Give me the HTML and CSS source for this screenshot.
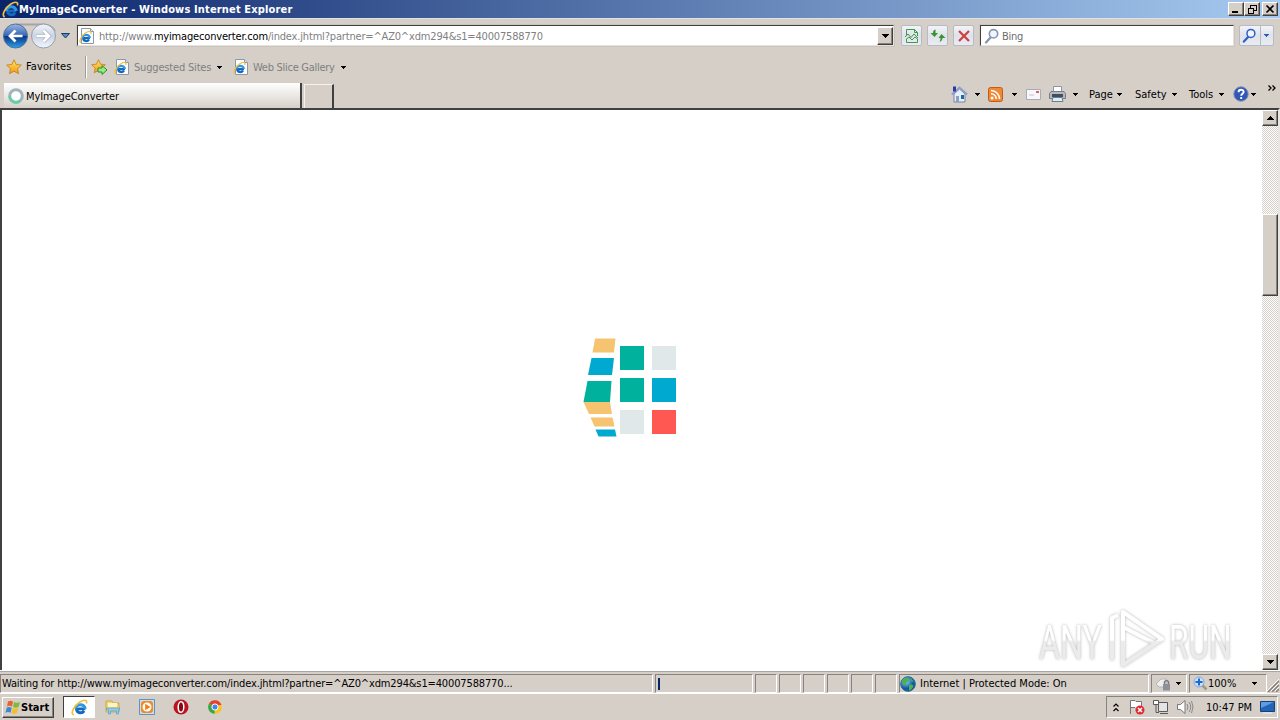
FILE: index.html
```html
<!DOCTYPE html>
<html lang="en">
<head>
  <meta charset="UTF-8">
  <title>MyImageConverter - Windows Internet Explorer</title>
  <link rel="stylesheet" href="styles.css">
</head>
<body>
  <svg class="defs" width="0" height="0">
    <defs>
      <linearGradient id="gold" x1="0" y1="0" x2="0" y2="1"><stop offset="0" stop-color="#ffe36a"/><stop offset="1" stop-color="#f29a12"/></linearGradient>
      <linearGradient id="blue" x1="0" y1="0" x2="0" y2="1"><stop offset="0" stop-color="#9db8e2"/><stop offset=".48" stop-color="#3566b5"/><stop offset=".52" stop-color="#0b3488"/><stop offset="1" stop-color="#2ba3e8"/></linearGradient>
      <linearGradient id="pale" x1="0" y1="0" x2="0" y2="1"><stop offset="0" stop-color="#f2f5fa"/><stop offset=".5" stop-color="#cbd3e2"/><stop offset="1" stop-color="#f3f8fd"/></linearGradient>
      <linearGradient id="mark" x1="0" y1="612" x2="0" y2="668" gradientUnits="userSpaceOnUse"><stop offset=".5" stop-color="#fff"/><stop offset=".53" stop-color="#ebebeb"/></linearGradient>
      <linearGradient id="mark-text" x1="0" y1="-47" x2="0" y2="9" gradientUnits="userSpaceOnUse"><stop offset=".5" stop-color="#fff"/><stop offset=".53" stop-color="#ebebeb"/></linearGradient>
      <radialGradient id="globe" cx=".35" cy=".3"><stop offset="0" stop-color="#9ddcff"/><stop offset="1" stop-color="#1456a8"/></radialGradient>
    </defs>
    <symbol id="ie" viewBox="0 0 16 16">
      <path d="M13.500 9.300H5.200C5.500 13.600 10.500 13.900 12.300 11.200" fill="none" stroke="#1668be" stroke-width="2.800"/>
      <path d="M3.800 9.300A5 5.200 0 0 1 13.500 9.300" fill="none" stroke="#2f97e4" stroke-width="2.800"/>
      <path d="M2.600 14.900C-1.200 14 3.200 6.100 8 3C11.800.6 15.800.2 14.500 4.200" fill="none" stroke="#f0c23c" stroke-width="1.600"/>
    </symbol>
    <symbol id="page" viewBox="0 0 16 16">
      <path d="M2.500.5h9l3 3v12h-12z" fill="#fdfdfd" stroke="#8d98aa"/>
      <path d="M11.500.5v3h3" fill="#dfe5ee" stroke="#8d98aa"/>
      <use href="#ie" x="0" y="2.500" width="13" height="13"/>
    </symbol>
    <symbol id="star" viewBox="0 0 16 16">
      <path d="M8 .8l2.200 4.700 5.100.6-3.800 3.500 1 5.100L8 12.200l-4.500 2.500 1-5.100L.7 6.100l5.100-.6z" fill="url(#gold)" stroke="#c98216" stroke-width=".9" stroke-linejoin="round"/>
    </symbol>
    <symbol id="lens" viewBox="0 0 16 16">
      <path d="M7 9L2 14.500" stroke="currentColor" stroke-width="2.300" stroke-linecap="round"/>
      <circle cx="9.500" cy="5.800" r="4.200" fill="#eef5ff" stroke="currentColor" stroke-width="1.600"/>
    </symbol>
    <symbol id="caret" viewBox="0 0 5 3" shape-rendering="crispEdges"><path d="M0 0h5v1H0zM1 1h3v1H1zM2 2h1v1H2z" fill="currentColor"/></symbol>
    <symbol id="caret-lg" viewBox="0 0 7 4" shape-rendering="crispEdges"><path d="M0 0h7v1H0zM1 1h5v1H1zM2 2h3v1H2zM3 3h1v1H3z"/></symbol>
  </svg>

  <header class="titlebar">
    <svg class="title-icon" width="17" height="17"><use href="#ie"/></svg>
    <h1 class="title-text">MyImageConverter - Windows Internet Explorer</h1>
    <div class="win-buttons">
      <span class="bevel win-btn"><svg width="12" height="10" shape-rendering="crispEdges"><path d="M2 7h6v2H2z"/></svg></span>
      <span class="bevel win-btn"><svg width="12" height="10" shape-rendering="crispEdges"><path d="M4.500 4V1H10v5H8M4 1.500h6M2.500 4v5h5V4zM2 4.500h6" fill="none" stroke="#000"/></svg></span>
      <span class="bevel win-btn win-close"><svg width="12" height="10"><path d="M2.500 1.500l7 7M9.500 1.500l-7 7" stroke="#000" stroke-width="1.700"/></svg></span>
    </div>
  </header>

  <div class="address-row">
    <svg class="nav" width="72" height="30" viewBox="0 0 72 30">
      <path d="M16 3.500h27q9 0 12 7" fill="none" stroke="#a3a4ac" stroke-width="2"/>
      <circle cx="15.500" cy="15" r="12" fill="url(#blue)" stroke="#557099"/>
      <path d="M22.500 15H11M15.500 9.500L10 15l5.500 5.500" fill="none" stroke="#fff" stroke-width="2.700"/>
      <circle cx="43.500" cy="15" r="12" fill="url(#pale)" stroke="#949daf"/>
      <path d="M36.500 15H48M43.500 9.500L49 15l-5.500 5.500" fill="none" stroke="#a9b3c6" stroke-width="4"/>
      <path d="M36.500 15H48M43.500 9.500L49 15l-5.500 5.500" fill="none" stroke="#fff" stroke-width="2.500"/>
      <path d="M61.500 12.500h8l-4 4.500z" fill="#4d8fc8" stroke="#1b3c66"/>
    </svg>
    <div class="field address">
      <svg width="16" height="16"><use href="#page"/></svg>
      <span class="url">http://www.<b>myimageconverter.com</b>/index.jhtml?partner=^AZ0^xdm294&amp;s1=40007588770</span>
      <span class="bevel drop"><svg width="7" height="4"><use href="#caret-lg"/></svg></span>
    </div>
    <span class="tool-btn"><svg width="16" height="16" fill="none" stroke="#3f9a49"><path d="M2.500 8V1.500h8l3 3V8M2.500 11v3.500h11V11M10.500 1.500v3h3M1 9l3-3 3 3.500L10 6l4 4M2 11.500L5 9l3 3 3-3 3 2.500"/></svg></span>
    <span class="tool-btn"><svg width="18" height="16"><path d="M6.500 1.500C4.500 2 4 3 4 5H1.500L5.500 9 9 5H6.500C6.500 3.500 6.500 2.500 6.500 1.500zM10.500 14c2-1 3-2 3-4h3L12.500 6 9.500 10h2C11.500 12 11 13 10.500 14z" fill="#38942f"/></svg></span>
    <span class="tool-btn"><svg width="16" height="16"><path d="M3 3l10 10M13 3L3 13" stroke="#cc4343" stroke-width="2.300"/></svg></span>
    <div class="field search">
      <svg width="16" height="16" color="#8796ac"><use href="#lens"/></svg>
      <span class="search-text">Bing</span>
    </div>
    <span class="tool-btn search-go">
      <svg width="15" height="15" color="#2860c8"><use href="#lens"/></svg>
      <i class="go-split"></i>
      <svg width="5" height="3" color="#2a5fae"><use href="#caret"/></svg>
    </span>
  </div>

  <div class="fav-row">
    <svg width="16" height="16"><use href="#star"/></svg>
    <span class="fav-label">Favorites</span>
    <i class="fav-sep"></i>
    <svg width="17" height="16" viewBox="0 0 17 16"><use href="#star" width="15" height="15"/><path d="M7 9h4V6.500l5 4.500-5 4.500V13H7z" fill="#9be885" stroke="#27912b"/></svg>
    <svg class="fav-page" width="16" height="16"><use href="#page"/></svg>
    <span class="fav-link sites">Suggested Sites</span>
    <svg width="5" height="3"><use href="#caret"/></svg>
    <svg class="fav-page second" width="16" height="16"><use href="#page"/></svg>
    <span class="fav-link slices">Web Slice Gallery</span>
    <svg width="5" height="3"><use href="#caret"/></svg>
  </div>

  <div class="tab-row">
    <div class="tab">
      <svg width="16" height="16"><circle cx="8" cy="8" r="6.300" fill="#fff" stroke="#9fb5bd" stroke-width="3"/><path d="M1.700 8a6.300 6.300 0 0 0 10.500 4.700" fill="none" stroke="#61cfa9" stroke-width="2.500"/></svg>
      <span class="tab-text">MyImageConverter</span>
    </div>
    <div class="new-tab"></div>
    <div class="commands">
      <svg class="home" width="17" height="17" viewBox="0 0 17 17"><path d="M3 8v8h11V8L8.500 3z" fill="#e9eef8" stroke="#7384a7"/><path d="M.8 8.500L8.500 1.500l7.700 7" fill="none" stroke="#8fa0cd" stroke-width="2"/><path d="M2 .5h3v5H2z" fill="#2b3ba0"/><path d="M5 10h3v6H5z" fill="#8da0c4"/><path d="M10 9h3v4h-3z" fill="#1b6a9a"/></svg>
      <svg class="c1" width="5" height="3"><use href="#caret"/></svg>
      <svg class="rss" width="15" height="15" viewBox="0 0 15 15"><rect x=".5" y=".5" width="14" height="14" rx="2" fill="#ef8935" stroke="#c45d14"/><circle cx="4" cy="11" r="1.500" fill="#fff"/><path d="M3 6.800A5 5 0 0 1 8.200 12M3 3.500A8.500 8.500 0 0 1 11.500 12" fill="none" stroke="#fff" stroke-width="1.600"/></svg>
      <svg class="c2" width="5" height="3"><use href="#caret"/></svg>
      <svg class="mail" width="15" height="11" viewBox="0 0 15 11"><path d="M.5.5h14v10H.5z" fill="#f8f8fa" stroke="#a8aab8"/><path d="M10 2h3v2h-3z" fill="#d9606f"/><path d="M3 6h5" stroke="#c2c4cf"/></svg>
      <svg class="printer" width="17" height="16" viewBox="0 0 17 16"><path d="M4.500 6V.5h8V6" fill="#fff" stroke="#8c95a5"/><path d="M2 5.500h13l1.500 2v5H.5v-5z" fill="#b4b8c0" stroke="#777e8a"/><path d="M3 8h11v3H3z" fill="#454d59"/><path d="M4 11.500h9l1 4H3z" fill="#d9eefb" stroke="#6b7e91"/></svg>
      <svg class="c3" width="5" height="3"><use href="#caret"/></svg>
      <span class="cmd cmd-page">Page</span>
      <svg width="5" height="3"><use href="#caret"/></svg>
      <span class="cmd cmd-safety">Safety</span>
      <svg width="5" height="3"><use href="#caret"/></svg>
      <span class="cmd cmd-tools">Tools</span>
      <svg width="5" height="3"><use href="#caret"/></svg>
      <svg class="help" width="16" height="16" viewBox="0 0 16 16"><circle cx="8" cy="8" r="7.200" fill="#3157b6" stroke="#7b8dba"/><path d="M5.500 6.200C5.500 2.800 10.800 3 10.600 6 10.500 7.800 8.200 7.800 8.200 9.800M8.200 11v2" fill="none" stroke="#fff" stroke-width="1.900"/></svg>
      <svg class="c4" width="5" height="3"><use href="#caret"/></svg>
      <svg class="more" width="8" height="6"><path d="M.5.5L3 3 .5 5.500M4.500.5L7 3 4.500 5.500" fill="none" stroke="#000" stroke-width="1.300"/></svg>
    </div>
  </div>

  <main class="viewport">
    <div class="content">
      <svg class="loader" width="94" height="100" viewBox="583 338 94 100">
        <path d="M595 338.500h20.500l-1.500 14h-21.500z" fill="#f6c470"/>
        <path d="M591.500 358H614l-2 17h-24z" fill="#00a9d0"/>
        <path d="M587.500 381h24l-1.500 21h-26.500z" fill="#00b19d"/>
        <path d="M583.500 402H610l2 12h-23z" fill="#f6c470"/>
        <path d="M590.500 417.500h22l2 9h-20z" fill="#f6c470"/>
        <path d="M595.500 429.500h19.500l1.500 7h-18z" fill="#00a9d0"/>
        <path d="M620 346h24v24h-24zM620 378h24v24h-24z" fill="#00b19d"/>
        <path d="M652 346h24v24h-24zM620 410h24v24h-24z" fill="#e1e8ea"/>
        <path d="M652 378h24v24h-24z" fill="#00a9d0"/>
        <path d="M652 410h24v24h-24z" fill="#ff5751"/>
      </svg>
      <svg class="watermark" width="214" height="68" viewBox="1034 606 214 68">
        <g class="wm-text">
          <text transform="translate(1039 659) scale(.67 1)">ANY</text>
          <text transform="translate(1169 659) scale(.66 1)">RUN</text>
        </g>
        <g class="wm-logo">
          <path d="M1123 612v53l39-26z"/>
          <path d="M1112 660v-42l6-3"/>
          <path d="M1123 627l33 17"/>
        </g>
      </svg>
    </div>
    <div class="scrollbar">
      <span class="bevel scroll-btn"><svg class="up" width="7" height="4"><use href="#caret-lg"/></svg></span>
      <span class="bevel thumb"></span>
      <span class="bevel scroll-btn scroll-down"><svg width="7" height="4"><use href="#caret-lg"/></svg></span>
    </div>
  </main>

  <div class="statusbar">
    <div class="pane pane-text"><span class="status-text">Waiting for http://www.myimageconverter.com/index.jhtml?partner=^AZ0^xdm294&amp;s1=40007588770...</span></div>
    <div class="pane pane-progress"><i class="progress"></i></div>
    <div class="pane pane-small"></div>
    <div class="pane pane-small"></div>
    <div class="pane pane-small"></div>
    <div class="pane pane-small"></div>
    <div class="pane pane-small"></div>
    <div class="pane pane-small"></div>
    <div class="pane pane-zone">
      <svg width="16" height="16" viewBox="0 0 16 16"><circle cx="8" cy="8" r="7.300" fill="url(#globe)" stroke="#276c86"/><path d="M3 4c3-3 6-2 6 0s-3 2-3 4-3 1-4-1zM9 9c3-1 5 0 4 2s-3 4-4 3zM11 2l3 4-3-1z" fill="#47b54a"/></svg>
      <span class="zone-text">Internet | Protected Mode: On</span>
    </div>
    <div class="pane pane-lock">
      <svg width="18" height="14" viewBox="0 0 18 14"><path d="M1 7l5-5h5v8H4z" fill="#eee" stroke="#b5b5b8"/><path d="M8 7h7v6.500H8z" fill="#8e9097"/><path d="M9.500 7V5q2-3 4 0v2" fill="none" stroke="#777a82" stroke-width="1.500"/></svg>
      <svg class="lock-caret" width="5" height="3"><use href="#caret"/></svg>
    </div>
    <div class="pane pane-zoom">
      <svg width="15" height="15" viewBox="0 0 15 15"><path d="M9 9l4.500 4.500" stroke="#a09a86" stroke-width="2.500"/><circle cx="6" cy="6" r="5" fill="#c9e2fb" stroke="#84a8d4"/><path d="M6 2.500v7M2.500 6h7" stroke="#2268cf" stroke-width="2"/></svg>
      <span class="zoom-text">100%</span>
      <svg width="5" height="3"><use href="#caret"/></svg>
    </div>
    <svg class="grip" width="12" height="13"><path d="M1 13L12 2M5 13l7-7M9 13l3-3" stroke="#858078" stroke-width="1.500"/><path d="M0 12L12 0M4 12l8-8M8 12l4-4" stroke="#fff"/></svg>
  </div>

  <footer class="taskbar">
    <div class="bevel start">
      <svg width="16" height="16" viewBox="0 0 16 16"><path d="M3 2.500q2.500-1.500 5 0L7 7.500q-2.500-1.500-5 0z" fill="#e8622c"/><path d="M9 3q2.500 1.500 6 0L13.500 8q-3 1.500-5.500 0z" fill="#82b93c"/><path d="M1.700 8.700q2.500-1.500 5 0l-1.200 5q-2.500-1.500-5 0z" fill="#3c87d0"/><path d="M7.700 9q2.500 1.500 5.500 0L12 14q-3 1.500-5.500 0z" fill="#f5bd28"/></svg>
      <span class="start-text">Start</span>
    </div>
    <div class="task-active"><svg width="17" height="17"><use href="#ie"/></svg></div>
    <svg class="t-folder" width="16" height="16" viewBox="0 0 16 16"><path d="M1 2h6l1 2h6v9H1z" fill="#f0d77d" stroke="#c9a94b"/><path d="M3 4h9v4H3z" fill="#fff3bf"/><path d="M1.500 9h13v2h-1v4h-2v-3h-6v3h-2v-4h-2z" fill="#8fcbea" stroke="#5a9fc4" stroke-width=".7"/></svg>
    <svg class="t-media" width="16" height="16" viewBox="0 0 16 16"><path d="M.5.500h15v15H.5z" fill="#c7e0f4" stroke="#5794c9"/><rect x="2" y="2" width="12" height="12" rx="3" fill="#f48a1c"/><circle cx="8" cy="8" r="4.500" fill="#fff"/><path d="M6.200 4.800L11.500 8l-5.300 3.200z" fill="#f07f13"/></svg>
    <svg class="t-opera" width="16" height="16" viewBox="0 0 16 16"><circle cx="8" cy="8" r="7.500" fill="#b81522"/><ellipse cx="8" cy="8" rx="2.800" ry="5.300" fill="#8b0713" stroke="#fff" stroke-width="1.500"/></svg>
    <svg class="t-chrome" width="14" height="14" viewBox="0 0 14 14"><circle cx="7" cy="7" r="6.800" fill="#f7c51f"/><path d="M7 7L1 3.700A6.800 6.800 0 0 1 13 4z" fill="#e34133"/><path d="M7 7L1 3.700A6.800 6.800 0 0 0 6.500 13.800z" fill="#32a853"/><path d="M7 4h6l.5 1H9z" fill="#e34133"/><circle cx="7" cy="7" r="3.100" fill="#4285f4" stroke="#fff"/></svg>
    <div class="tray">
      <svg width="6" height="9" class="tray-more"><path d="M.5 3.500L3 1l2.500 2.500M.5 8L3 5.500 5.500 8" fill="none" stroke="#000" stroke-width="1.200"/></svg>
      <svg class="flag" width="16" height="16" viewBox="0 0 16 16"><path d="M1.500 15V1.500H6l1 1h5.500v7H7l-1-1H2" fill="#fff" stroke="#777"/><circle cx="11" cy="11" r="4.500" fill="#dd2b32"/><path d="M9 9l4 4M13 9l-4 4" stroke="#fff" stroke-width="1.500"/></svg>
      <svg class="net" width="16" height="16" viewBox="0 0 16 16"><path d="M5.500 3.500h9v9h-9z" fill="#e4e4e4" stroke="#5a5a5a"/><path d="M7 14.500h8" stroke="#5a5a5a"/><path d="M.5 1.500h5v4h-5zM3 5.500v8h3" fill="none" stroke="#5a5a5a"/><path d="M1 2h4v3H1z" fill="#fff"/></svg>
      <svg class="sound" width="17" height="16" viewBox="0 0 17 16"><path d="M.5 5.500h3L8 1.500v13l-4.500-4h-3z" fill="#fff" stroke="#777"/><path d="M10 5q2 3 0 6M12 3q3.500 5 0 10M14.500 2q3 6 0 12" fill="none" stroke="#888"/></svg>
      <span class="clock">10:47 PM</span>
      <svg class="desk" width="15" height="13" viewBox="0 0 15 13"><path d="M.5.5h14v10H.5z" fill="#2364b8" stroke="#1a3f78"/><path d="M1 1h13L1 7z" fill="#5c9ce0"/><path d="M3 12h9" stroke="#dfe5ee" stroke-width="1.500"/></svg>
    </div>
  </footer>
</body>
</html>
```
FILE: styles.css
```css
:root {
  --face: #d5cfc8;
  --dark: #404040;
  --shadow: #87827b;
}
* { box-sizing: border-box; }
body {
  margin: 0;
  width: 1280px;
  height: 720px;
  overflow: hidden;
  display: flex;
  flex-direction: column;
  background: var(--face);
  color: #000;
  font: 11px/14px "DejaVu Sans Condensed", "DejaVu Sans", Tahoma, sans-serif;
  font-stretch: condensed;
  white-space: nowrap;
}
svg { display: block; flex: none; }
.defs { position: absolute; }
span, i, div { flex: none; }

.bevel {
  background: var(--face);
  border: 1px solid;
  border-color: #fff var(--dark) var(--dark) #fff;
  box-shadow: inset -1px -1px 0 var(--shadow);
}

/* Title bar */
.titlebar {
  height: 18px;
  display: flex;
  align-items: center;
  padding: 0 2px;
  background: linear-gradient(90deg, #0a246a, #a6caf0);
  color: #fff;
}
.title-text {
  margin: 0;
  padding-top: 1px;
  font-size: 11px;
  letter-spacing: 0.15px;
}
.win-buttons { display: flex; margin-left: auto; }
.win-btn {
  width: 16px;
  height: 14px;
  padding: 1px;
}
.win-close { margin-left: 2px; }

/* Address row */
.address-row {
  height: 34px;
  display: flex;
  align-items: center;
  border-top: 1px solid #dfe1e8;
}
.field {
  height: 21px;
  display: flex;
  align-items: center;
  background: #fff;
  border: 1px solid;
  border-color: var(--dark) #e6e3dc #e6e3dc var(--dark);
  box-shadow: 0 0 0 1px #c9c4bc;
}
.address {
  width: 817px;
  margin: 0 7px 0 5px;
  padding-left: 1px;
}
.url {
  margin-left: 4px;
  padding-top: 2px;
  color: #808080;
  letter-spacing: -0.17px;
}
.url b { color: #000; font-weight: normal; }
.drop {
  width: 16px;
  height: 18px;
  margin-left: auto;
  padding: 6px 0 0 4px;
}
.tool-btn {
  width: 21px;
  height: 21px;
  display: flex;
  align-items: center;
  justify-content: center;
  margin-right: 5px;
  background: linear-gradient(#f3f4f8, #dfe2ea 50%, #e9ecf2);
  border: 1px solid #b5bac6;
  border-radius: 2px;
}
.search { width: 254px; margin: 0 5px 0 1px; padding-left: 3px; }
.search-text { margin-left: 2px; padding-top: 2px; color: #6d6d6d; letter-spacing: -0.3px; }
.search-go { width: 35px; margin: 0; justify-content: flex-start; padding-left: 2px; }
.go-split { width: 1px; height: 19px; margin: 0 3px 0 3px; background: #b5bac6; }

/* Favorites bar */
.fav-row {
  height: 30px;
  display: flex;
  align-items: center;
  padding-left: 6px;
}
.fav-label { width: 60px; margin-left: 4px; letter-spacing: 0.1px; }
.fav-sep {
  width: 2px;
  height: 22px;
  margin-left: -1px;
  margin-right: 4px;
  border-left: 1px solid #a09b94;
  border-right: 1px solid #fff;
}
.fav-page { margin-left: 6px; }
.fav-page.second { margin-left: 11px; }
.fav-link { margin-left: 4px; padding-top: 1px; color: #808080; letter-spacing: -0.18px; }
.sites { width: 83px; }
.slices { width: 88px; letter-spacing: -0.28px; }

/* Tabs and command bar */
.tab-row {
  height: 26px;
  display: flex;
  align-items: flex-end;
  padding-left: 4px;
}
.tab {
  width: 298px;
  height: 25px;
  display: flex;
  align-items: center;
  padding-left: 4px;
  background: linear-gradient(#fff, #e7e4df 60%, var(--face));
  border-right: 2px solid var(--dark);
}
.tab-text { margin-left: 2px; padding-top: 2px; letter-spacing: -0.1px; }
.new-tab {
  width: 30px;
  height: 24px;
  margin-left: 2px;
  border: 1px solid #f4f2ee;
  border-right: 2px solid var(--dark);
  border-bottom: 0;
}
.commands {
  height: 26px;
  display: flex;
  align-items: center;
  padding-left: 617px;
  padding-bottom: 2px;
}
.c1 { margin-left: 7px; }
.rss { margin-left: 8px; }
.c2 { margin-left: 9px; }
.mail { margin-left: 9px; }
.printer { margin-left: 8px; }
.c3 { margin-left: 7px; }
.cmd { padding-top: 2px; }
.cmd-page { width: 28px; margin-left: 11px; }
.cmd-safety { width: 37px; margin-left: 13px; }
.cmd-tools { width: 30px; margin-left: 12px; }
.help { margin-left: 9px; }
.c4 { margin-left: 2px; }
.more { margin: 0 0 13px 12px; }

/* Page area */
.viewport {
  height: 562px;
  display: flex;
  border-top: 2px solid var(--dark);
  border-left: 2px solid var(--dark);
  border-right: 2px solid #e9e6e1;
  background: #fff;
}
.content {
  width: 1260px;
  position: relative;
  display: flex;
  align-items: flex-start;
  justify-content: center;
  padding-right: 4px;
}
.loader { margin-top: 228px; }
.watermark {
  position: absolute;
  right: 14px;
  bottom: -4px;
}
.wm-text {
  font: 400 48px Roboto, sans-serif;
  fill: url(#mark-text);
  filter: drop-shadow(0 0 1.5px #b4b4b4);
}
.wm-logo {
  fill: none;
  stroke: url(#mark);
  stroke-width: 4px;
  stroke-linejoin: round;
  filter: drop-shadow(0 0 1.5px #b4b4b4);
}
.scrollbar {
  width: 16px;
  height: 560px;
  display: flex;
  flex-direction: column;
  background: repeating-conic-gradient(#fff 0 25%, #d5cfc8 0 50%) 0 0 / 2px 2px;
}
.scroll-btn { height: 16px; padding: 5px 0 0 4px; }
.up { transform: rotate(180deg); }
.thumb { height: 82px; margin-top: 88px; }
.scroll-down { margin-top: auto; }

/* Status bar */
.statusbar {
  height: 24px;
  display: flex;
  align-items: flex-start;
  gap: 2px;
  padding-top: 3px;
  border-top: 1px solid #fff;
  border-bottom: 1px solid #fff;
  box-shadow: inset 0 1px 0 #aaa59e;
}
.pane {
  height: 19px;
  display: flex;
  align-items: center;
  border: 1px solid;
  border-color: var(--shadow) #fff #fff var(--shadow);
}
.pane-text { width: 653px; padding-left: 1px; }
.status-text { letter-spacing: -0.14px; }
.pane-progress { width: 98px; padding-left: 2px; }
.progress { width: 2px; height: 12px; background: #0a246a; }
.pane-small { width: 22px; }
.pane-zone { width: 250px; }
.zone-text { margin-left: 4px; }
.pane-lock { width: 36px; padding-left: 3px; }
.lock-caret { margin-left: 3px; }
.pane-zoom { width: 78px; padding-left: 3px; }
.zoom-text { width: 44px; margin-left: 0; }
.grip { margin-top: 5px; margin-left: -2px; }

/* Taskbar */
.taskbar {
  height: 26px;
  display: flex;
  align-items: center;
  padding: 0 2px;
}
.start {
  width: 52px;
  height: 21px;
  display: flex;
  align-items: center;
  padding-left: 2px;
}
.start-text { font-weight: bold; padding-top: 1px; }
.task-active {
  width: 32px;
  height: 22px;
  margin-left: 9px;
  padding: 2px 0 0 7px;
  background: #fff;
  border: 1px solid;
  border-color: var(--dark) #fff #fff var(--dark);
}
.t-folder { margin-left: 10px; }
.t-media { margin-left: 18px; }
.t-opera { margin-left: 18px; }
.t-chrome { margin-left: 19px; }
.tray {
  width: 172px;
  height: 22px;
  margin-left: auto;
  display: flex;
  align-items: center;
  padding-left: 6px;
  border: 1px solid;
  border-color: var(--shadow) #fff #fff var(--shadow);
}
.flag { margin-left: 10px; }
.net { margin-left: 8px; }
.sound { margin-left: 8px; }
.clock { width: 46px; margin-left: 12px; padding-top: 1px; }
.desk { margin-left: 8px; }
```
